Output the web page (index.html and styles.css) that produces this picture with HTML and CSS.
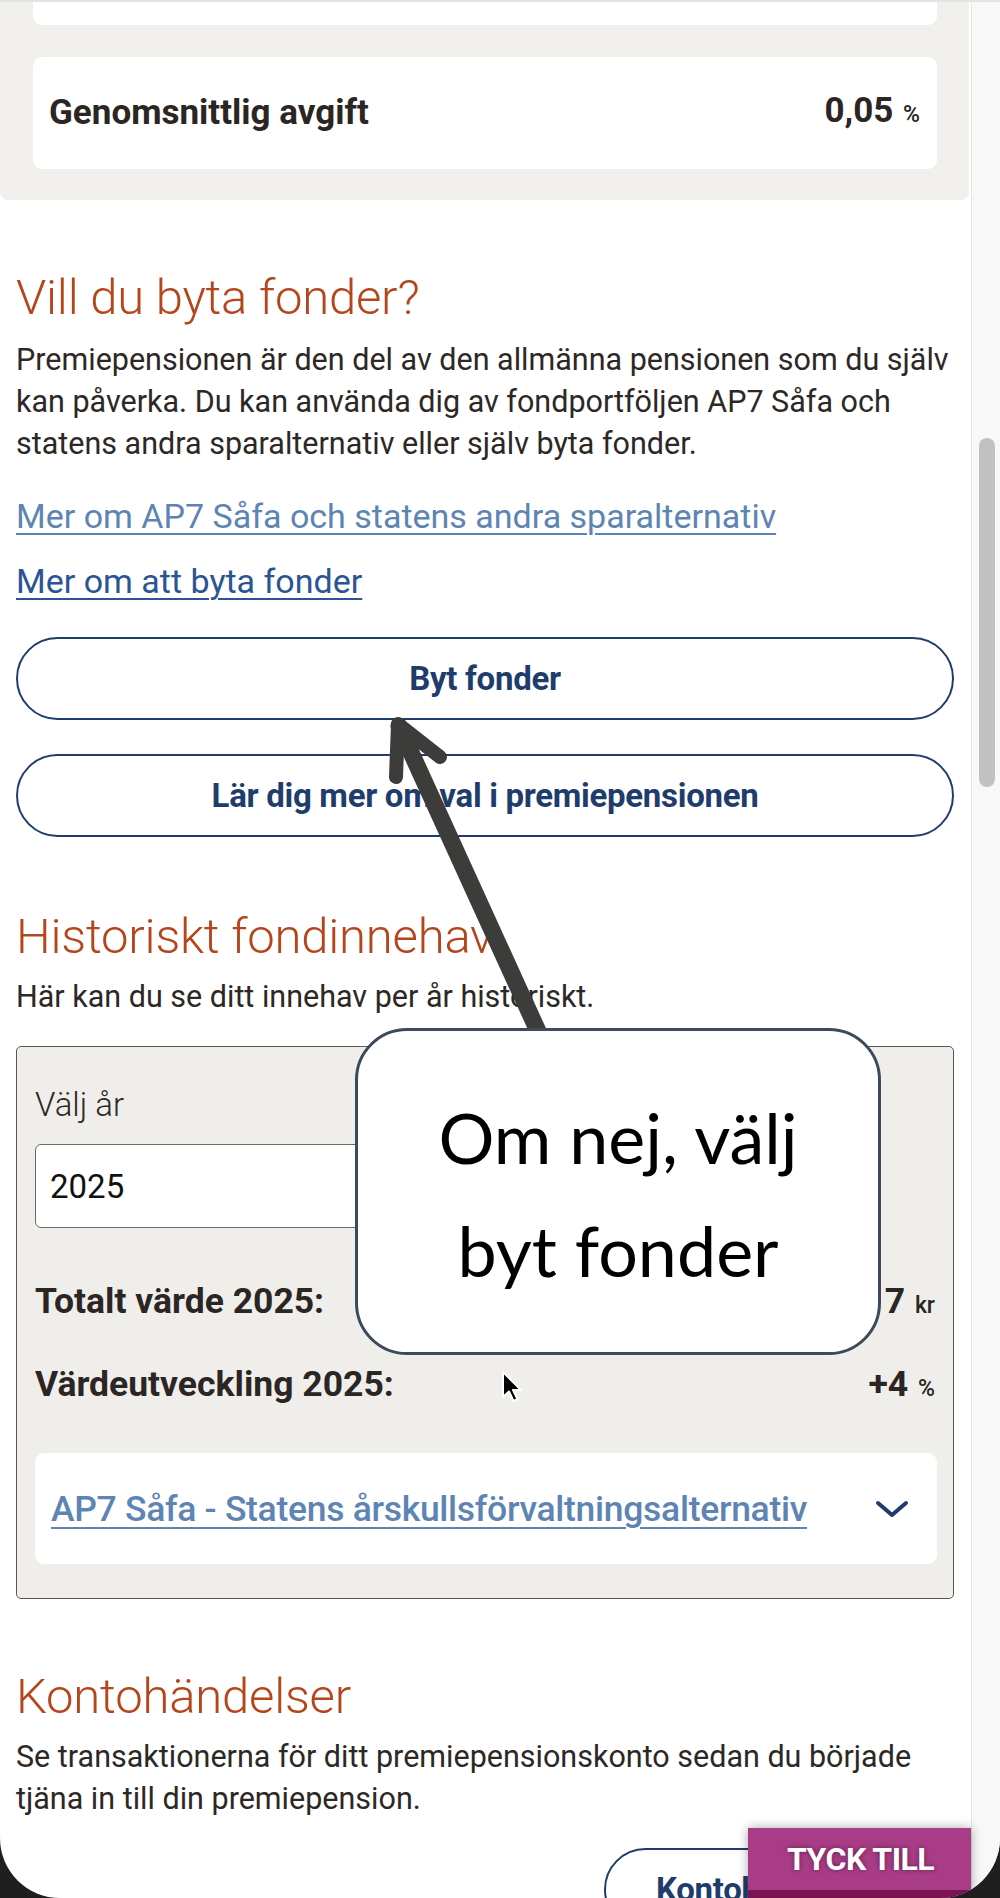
FILE: index.html
```html
<!DOCTYPE html>
<html lang="sv">
<head>
<meta charset="utf-8">
<title>Premiepension</title>
<link rel="stylesheet" href="styles.css">
</head>
<body>
<div class="screen">
  <main class="page">
    <section class="summary">
      <div class="card card-cut"></div>
      <div class="card card-row">
        <span class="row-label">Genomsnittlig avgift</span>
        <span class="row-value">0,05 <small>%</small></span>
      </div>
    </section>

    <section class="section">
      <h2 class="heading heading-first">Vill du byta fonder?</h2>
      <p class="text">Premiepensionen är den del av den allmänna pensionen som du själv kan påverka. Du kan använda dig av fondportföljen AP7 Såfa och statens andra sparalternativ eller själv byta fonder.</p>
      <ul class="links">
        <li><a class="link link-visited" href="#">Mer om AP7 Såfa och statens andra sparalternativ</a></li>
        <li><a class="link" href="#">Mer om att byta fonder</a></li>
      </ul>
      <div class="buttons">
        <a class="button" href="#">Byt fonder</a>
        <a class="button" href="#">Lär dig mer om val i premiepensionen</a>
      </div>

      <h2 class="heading heading-hist">Historiskt fondinnehav</h2>
      <p class="text text-intro">Här kan du se ditt innehav per år historiskt.</p>

      <div class="history">
        <label class="field-label" for="year">Välj år</label>
        <div class="select" id="year">2025</div>
        <div class="stat stat-first">
          <span class="stat-label">Totalt värde 2025:</span>
          <span class="stat-value">98 417 <small>kr</small></span>
        </div>
        <div class="stat">
          <span class="stat-label">Värdeutveckling 2025:</span>
          <span class="stat-value">+4 <small>%</small></span>
        </div>
        <div class="fund">
          <a class="fund-link" href="#">AP7 Såfa - Statens årskullsförvaltningsalternativ</a>
          <svg class="chevron" width="36" height="20" viewBox="0 0 36 20" aria-hidden="true">
            <polyline points="4,4 18,16 32,4" fill="none" stroke="#1f3d6c" stroke-width="4" stroke-linecap="round" stroke-linejoin="round"/>
          </svg>
        </div>
      </div>

      <h2 class="heading heading-konto">Kontohändelser</h2>
      <p class="text text-intro">Se transaktionerna för ditt premiepensionskonto sedan du började tjäna in till din premiepension.</p>
      <div class="konto-row">
        <a class="button button-konto" href="#">Kontohändelser</a>
      </div>
    </section>
  </main>

  <div class="scrollbar"><div class="thumb"></div></div>

  <svg class="arrow" width="1000" height="1898" viewBox="0 0 1000 1898" aria-hidden="true">
    <g stroke="#3c3c3a" fill="none" stroke-linecap="round" stroke-linejoin="round">
      <line x1="542" y1="1040" x2="399" y2="726" stroke-width="17"/>
      <polyline points="396,777 398,724 440,757" stroke-width="14"/>
    </g>
  </svg>

  <div class="callout">Om nej, välj<br>byt fonder</div>

  <svg class="cursor" width="22" height="34" viewBox="0 0 22 34" aria-hidden="true">
    <path d="M2 2 L2 27 L8 21.5 L12.5 31 L16.5 29.2 L12 20 L20 20 Z" fill="#000" stroke="#fff" stroke-width="2" stroke-linejoin="round"/>
  </svg>

  <a class="feedback" href="#">TYCK TILL</a>
</div>
</body>
</html>
```
FILE: styles.css
```css
* { box-sizing: border-box; }

html, body {
  margin: 0;
  padding: 0;
  background: #1f1f1f;
}

body {
  font-family: Roboto, "Open Sans", sans-serif;
  color: #2d2826;
}

.screen {
  position: relative;
  width: 1000px;
  height: 1898px;
  overflow: hidden;
  display: flex;
  background: #ffffff;
  border-top: 2px solid #e3e3e3;
  border-radius: 0 0 60px 60px;
}

.page {
  width: 971px;
  flex: none;
}

/* ---------- summary panel ---------- */
.summary {
  background: #f0efec;
  margin-right: 2px;
  padding: 0 32px 31px 33px;
  border-radius: 0 0 8px 8px;
}

.card {
  background: #ffffff;
  border-radius: 9px;
}

.card-cut {
  height: 23px;
  border-radius: 0 0 9px 9px;
}

.card-row {
  margin-top: 32px;
  height: 112px;
  display: flex;
  align-items: center;
  justify-content: space-between;
  padding: 0 17px 0 16px;
  font-weight: 700;
  font-size: 35px;
  line-height: 42px;
  color: #2b2624;
}

.row-value small, .stat-value small {
  font-size: 23px;
  font-weight: 500;
  margin-left: 1px;
}

/* ---------- main section ---------- */
.section {
  padding: 0 17px 0 16px;
}

.heading {
  margin: 0;
  font-weight: 300;
  font-size: 49px;
  line-height: 60px;
  color: #b5461b;
  letter-spacing: -0.2px;
}

.heading-first { margin-top: 68px; }
.heading-hist { margin-top: 70px; }
.heading-konto { margin-top: 68px; }

.text {
  margin: 11px 0 0;
  font-size: 30.5px;
  line-height: 42px;
}

.text-intro { margin-top: 9px; }

.links {
  list-style: none;
  margin: 30px 0 0;
  padding: 0;
  display: flex;
  flex-direction: column;
  gap: 23px;
}

.links li {
  font-size: 34px;
  line-height: 42px;
}

.link {
  color: #2b5592;
  text-decoration: underline;
  text-decoration-thickness: 2px;
  text-underline-offset: 5px;
}

.link-visited { color: #5d84b3; }

.buttons {
  margin-top: 35px;
  display: flex;
  flex-direction: column;
  gap: 34px;
}

.button {
  display: flex;
  align-items: center;
  justify-content: center;
  height: 83px;
  border: 2px solid #1f3d6c;
  border-radius: 42px;
  color: #1f3d6c;
  font-weight: 700;
  font-size: 33px;
  text-decoration: none;
  letter-spacing: -0.3px;
}

/* ---------- history box ---------- */
.history {
  margin-top: 28px;
  background: #f0eeeb;
  border: 1px solid #5b5553;
  border-radius: 5px;
  padding: 38px 16px 34px 18px;
  display: flex;
  flex-direction: column;
}

.field-label {
  font-weight: 300;
  font-size: 33px;
  line-height: 40px;
  color: #2d2826;
}

.select {
  margin-top: 19px;
  width: 440px;
  height: 84px;
  background: #ffffff;
  border: 1px solid #6e6965;
  border-radius: 6px;
  display: flex;
  align-items: center;
  padding-left: 14px;
  font-size: 33px;
  color: #111;
}

.stat {
  display: flex;
  justify-content: space-between;
  align-items: baseline;
  font-size: 35.5px;
  line-height: 42px;
  font-weight: 700;
  color: #2b2624;
  margin-top: 36px;
  padding-right: 2px;
}

.stat-first { margin-top: 52px; }

.fund {
  margin-top: 43px;
  height: 111px;
  background: #ffffff;
  border-radius: 9px;
  display: flex;
  align-items: center;
  justify-content: space-between;
  padding: 0 27px 0 16px;
}

.fund-link {
  color: #5d84b3;
  font-weight: 500;
  font-size: 35.5px;
  line-height: 42px;
  text-decoration: underline;
  text-decoration-thickness: 2px;
  text-underline-offset: 6px;
  letter-spacing: -0.3px;
  white-space: nowrap;
}

.chevron { flex: none; }

.konto-row {
  margin-top: 28px;
  display: flex;
  justify-content: flex-end;
}

.button-konto {
  width: 350px;
  justify-content: flex-start;
  padding-left: 50px;
}

/* ---------- scrollbar ---------- */
.scrollbar {
  flex: none;
  width: 29px;
  background: #f8f8f8;
  border-left: 1px solid #e4e4e4;
  display: flex;
  justify-content: center;
}

.thumb {
  margin-top: 436px;
  margin-left: 1px;
  width: 16px;
  height: 349px;
  background: #c1c1c1;
  border-radius: 8px;
}

/* ---------- overlays ---------- */
.arrow {
  position: absolute;
  left: 0;
  top: -2px;
  pointer-events: none;
}

.callout {
  position: absolute;
  left: 355px;
  top: 1026px;
  width: 526px;
  height: 327px;
  background: #ffffff;
  border: 3.5px solid #3c4a59;
  border-radius: 52px;
  padding-top: 50px;
  text-align: center;
  font-family: Lato, "Open Sans", sans-serif;
  font-size: 70px;
  line-height: 113px;
  color: #000;
}

.cursor {
  position: absolute;
  left: 501px;
  top: 1368px;
}

.feedback {
  position: absolute;
  right: 29px;
  bottom: 0;
  width: 223px;
  height: 70px;
  background: #a93c86;
  border-bottom: 8px solid #7a1450;
  box-shadow: 0 0 10px rgba(0, 0, 0, 0.35);
  color: #ffffff;
  font-weight: 700;
  font-size: 32px;
  line-height: 62px;
  padding-left: 39px;
  text-decoration: none;
  text-shadow: 0 0 5px rgba(0, 0, 0, 0.45);
  letter-spacing: -0.5px;
}
```
